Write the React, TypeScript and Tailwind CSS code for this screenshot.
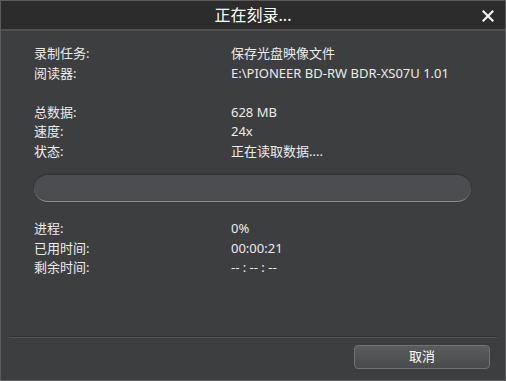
import React from 'react';

const rowsTop: [string, string][] = [
  ['录制任务:', '保存光盘映像文件'],
  ['阅读器:', 'E:\\PIONEER BD-RW BDR-XS07U 1.01'],
];

const rowsMid: [string, string][] = [
  ['总数据:', '628 MB'],
  ['速度:', '24x'],
  ['状态:', '正在读取数据....'],
];

const rowsBottom: [string, string][] = [
  ['进程:', '0%'],
  ['已用时间:', '00:00:21'],
  ['剩余时间:', '-- : -- : --'],
];

const InfoRow = ({ label, value }: { label: string; value: string }) => (
  <div className="flex h-[19.5px] items-center">
    <span className="w-[197px] shrink-0">{label}</span>
    <span>{value}</span>
  </div>
);

export default function App() {
  return (
    <div
      className="w-[506px] h-[381px] flex flex-col bg-[#3d3e40] border border-[#5b5c5e] text-[#ececec] text-[13px] overflow-hidden"
      style={{ fontFamily: '"Noto Sans", "Noto Sans CJK SC", sans-serif' }}
    >
      {/* title bar */}
      <div className="relative h-[30px] shrink-0 flex items-center justify-center bg-[#2c2c2c] border-b-2 border-[#4e4f51]">
        <span className="text-[16px] text-white">正在刻录...</span>
        <button className="absolute right-[9px] top-[7px] w-[16px] h-[16px] flex items-center justify-center">
          <svg width="12" height="12" viewBox="0 0 12 12">
            <path d="M1.5 1.5 L10.5 10.5 M10.5 1.5 L1.5 10.5" stroke="#f2f2f2" strokeWidth="2.2" strokeLinecap="square" />
          </svg>
        </button>
      </div>

      {/* body */}
      <div className="flex-1 flex flex-col pl-[33px] pr-[34px] pt-[13px]">
        {rowsTop.map(([l, v]) => (
          <InfoRow key={l} label={l} value={v} />
        ))}
        <div className="h-[19.5px]" />
        {rowsMid.map(([l, v]) => (
          <InfoRow key={l} label={l} value={v} />
        ))}

        <div className="mt-[13px] mb-[17px] h-[28px] rounded-full bg-[#4b4d50] border-t border-t-[#333436] border-b border-b-[#8b8e90] shadow-[0_0_0_1px_#393a3c]" />

        {rowsBottom.map(([l, v]) => (
          <InfoRow key={l} label={l} value={v} />
        ))}
      </div>

      {/* footer */}
      <div className="mx-[8px] border-t border-t-[#2f3032] h-[2px] border-b border-b-[#55575a]" />
      <div className="h-[42px] shrink-0 flex justify-end items-start pt-[7px] pr-[15px]">
        <button className="w-[136px] h-[24px] rounded-[4px] border border-[#707274] bg-gradient-to-b from-[#5a5b5d] to-[#4a4b4d] text-white text-[13px]">
          取消
        </button>
      </div>
    </div>
  );
}
